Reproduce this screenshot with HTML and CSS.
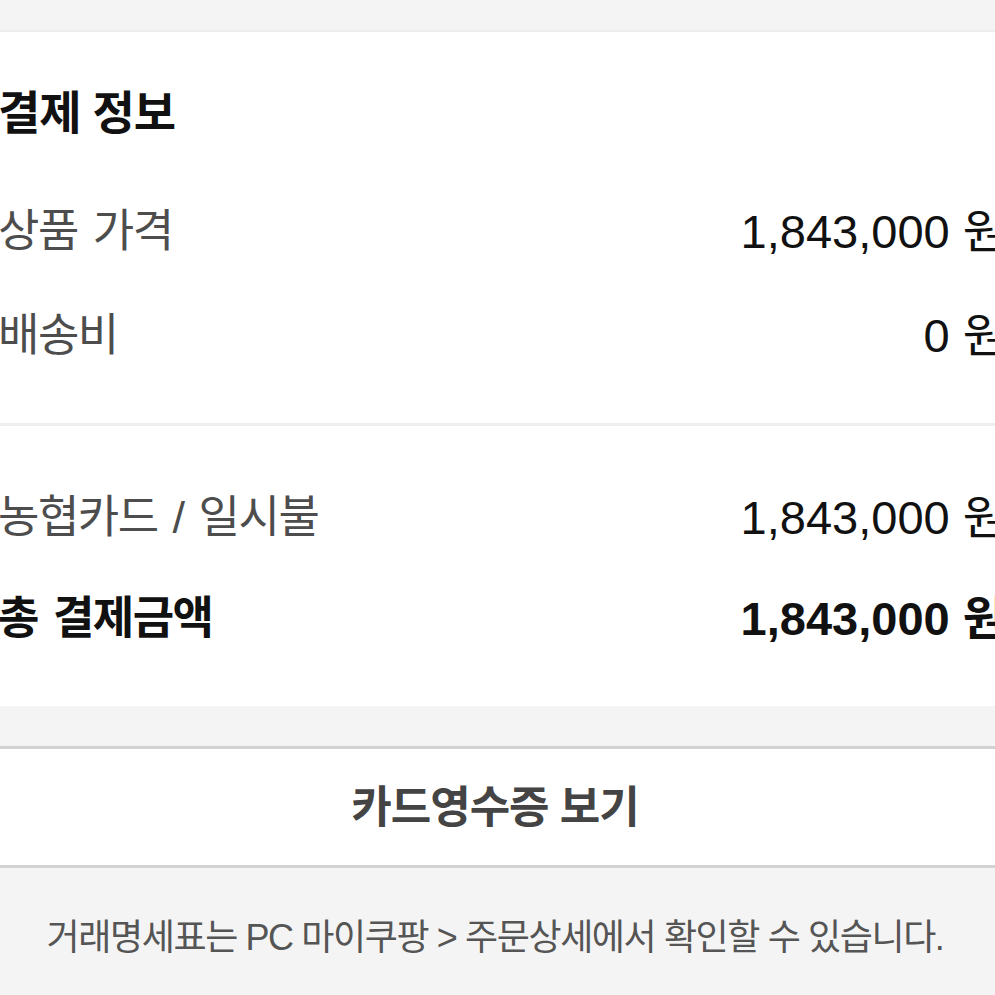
FILE: index.html
```html
<!DOCTYPE HTML>
<html lang="ko">
<head>
	<meta charset="utf-8">
	<title>결제 정보</title>
	<link rel="stylesheet" href="styles.css">
</head>
<body>
	<div class="page">
		<div class="gap-top"></div>

		<div class="card">
			<h2 class="card-title">결제 정보</h2>
			<div class="row">
				<span class="row-label">상품 가격</span>
				<span class="row-value">1,843,000 원</span>
			</div>
			<div class="row">
				<span class="row-label">배송비</span>
				<span class="row-value">0 원</span>
			</div>
		</div>

		<div class="card card-pay">
			<div class="row">
				<span class="row-label">농협카드 / 일시불</span>
				<span class="row-value">1,843,000 원</span>
			</div>
			<div class="row row-total">
				<span class="row-label">총 결제금액</span>
				<span class="row-value">1,843,000 원</span>
			</div>
		</div>

		<div class="gap-mid"></div>

		<a class="receipt" href="#">카드영수증 보기</a>

		<p class="note">거래명세표는 PC 마이쿠팡 &gt; 주문상세에서 확인할 수 있습니다.</p>
	</div>
</body>
</html>
```

FILE: styles.css
```css
html,
body {
	margin:0;
	padding:0;
	}
body {
	width:995px;
	height:995px;
	overflow:hidden;
	background:#f4f4f4;
	font-family:"Liberation Sans", "Noto Sans CJK KR", sans-serif;
	color:#111;
	}

.page {
	width:1020px;
	margin-left:-8px;
	}

.gap-top {
	height:30px;
	background:#f4f4f4;
	}

/* Card */
.card {
	background:#fff;
	border-top:2px solid #ececec;
	padding:0 6px 40px 6px;
	}
.card-title {
	margin:0;
	padding-top:52px;
	height:91px;
	line-height:58px;
	font-size:46px;
	font-weight:700;
	letter-spacing:-1px;
	color:#111;
	}
.card-pay {
	border-top:3px solid #eeeeee;
	padding-top:37px;
	padding-bottom:41px;
	}

/* Row */
.row {
	display:flex;
	justify-content:space-between;
	align-items:center;
	height:104px;
	}
.card-pay .row {
	height:101px;
	}
	.row-label {
		font-size:45px;
		color:#4d4d4d;
		letter-spacing:-1.5px;
		word-spacing:4px;
		}
	.row-value {
		font-size:47px;
		color:#111;
		}
.row-total .row-label,
.row-total .row-value {
	font-weight:700;
	color:#111;
	}

.gap-mid {
	height:40px;
	background:#f4f4f4;
	border-bottom:3px solid #d2d2d2;
	}

/* Receipt button */
.receipt {
	display:block;
	height:116px;
	line-height:118px;
	background:#fff;
	border-bottom:3px solid #d2d2d2;
	text-align:center;
	font-size:44px;
	font-weight:700;
	color:#444;
	text-decoration:none;
	letter-spacing:-1px;
	padding-right:14px;
	}

.note {
	margin:0;
	padding-top:40px;
	padding-right:14px;
	text-align:center;
	font-size:36px;
	color:#555;
	letter-spacing:-1.4px;
	}
```
